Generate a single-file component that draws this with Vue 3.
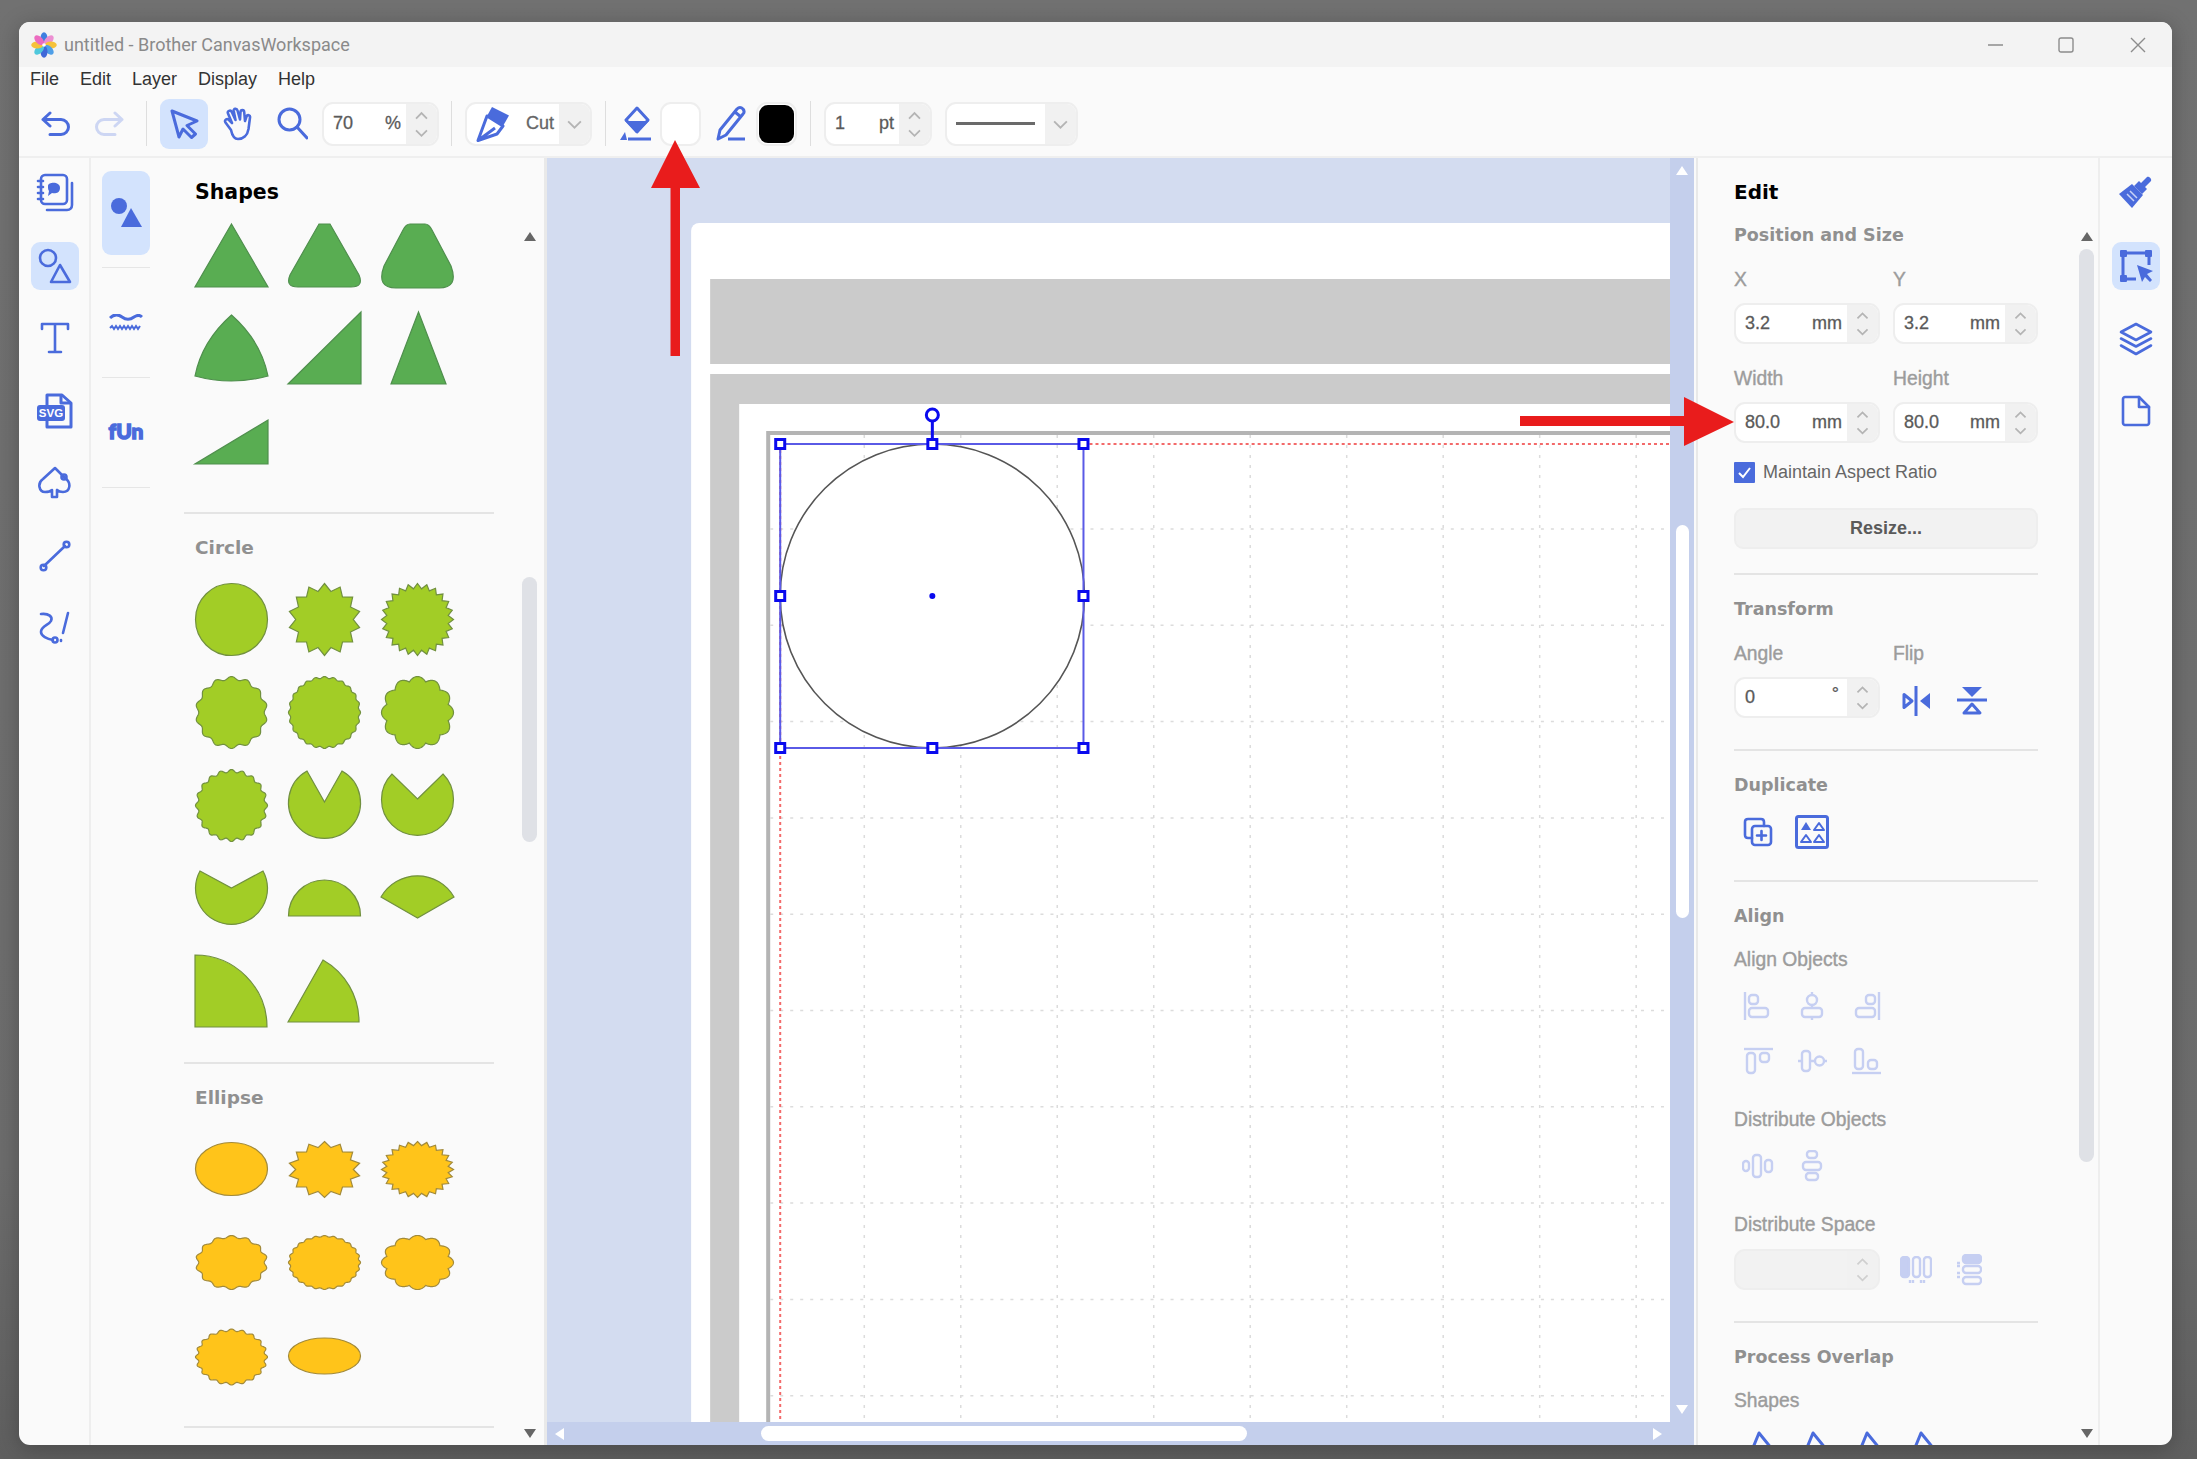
<template>
  <div class="desktop">
    <div class="window">
      <header class="titlebar">
        <svg class="logo" viewBox="0 0 26 26">
          <ellipse v-for="p in logoPetals" :key="p.deg" cx="13" cy="6.200" rx="3.500" ry="6" :fill="p.color" :transform="`rotate(${p.deg} 13 13)`" />
          <circle cx="13" cy="13" r="1.800" fill="#fff" />
        </svg>
        <span class="title">untitled - Brother CanvasWorkspace</span>
        <div class="win-btns">
          <svg viewBox="0 0 16 16"><path d="M0 8H15" /></svg>
          <svg viewBox="0 0 16 16"><rect x="1" y="1" width="14" height="14" rx="2" /></svg>
          <svg viewBox="0 0 16 16"><path d="M1 1L15 15M15 1L1 15" /></svg>
        </div>
      </header>

      <nav class="menubar">
        <span v-for="m in menus" :key="m">{{ m }}</span>
      </nav>

      <div class="toolbar">
        <div class="tool"><svg class="ico" width="30" height="26" viewBox="0 0 30 26"><path d="M9 2L2 8.5L9 15M2 8.500H20a7.500 7.500 0 0 1 0 15H9" /></svg></div>
        <div class="tool"><svg class="ico ico-off" width="30" height="26" viewBox="0 0 30 26"><path d="M21 2L28 8.500L21 15M28 8.500H10a7.500 7.500 0 0 0 0 15H21" /></svg></div>
        <div class="sep"></div>
        <div class="tool tall active"><svg class="ico" width="29" height="30" viewBox="0 0 29 30"><path d="M2 2L27 12L17 16.500L25.500 25L21.500 28.500L13 20L9 28Z" /></svg></div>
        <div class="tool"><svg class="ico thin" width="30" height="34" viewBox="0 0 30 34"><path d="M8 23L2.500 15.500C1 13 4 10.800 6 13L9 16L5 6.500C4 4 7.500 2.500 8.800 5L12.500 13L10.700 4C10.300 1.500 13.800 1 14.500 3.500L17 12.500L17.500 5C17.700 2.500 21 2.500 21.200 5L22 14L23.500 9.500C24.400 7.200 27.500 8 27 10.500L25.500 22C24.500 28.500 20 32 15 32C12 32 9.500 30 8 23Z" /></svg></div>
        <div class="tool"><svg class="ico" width="31" height="33" viewBox="0 0 31 33"><circle cx="12.500" cy="12.500" r="10.500" /><path d="M20 20L30 31" /></svg></div>
        <div class="spin spin-lg">
          <span class="val">70</span><span class="unit">%</span>
          <div class="spin-btns"><svg viewBox="0 0 30 44"><path d="M9 16L15 10L21 16M9 29L15 35L21 29" /></svg></div>
        </div>
        <div class="sep"></div>
        <div class="spin spin-lg cut">
          <svg class="cut-ico" width="34" height="36" viewBox="0 0 34 36">
            <path class="solid" d="M16 1L33 9.500L27 20L11 10Z" />
            <path class="ico-line" d="M11 10L27 20L21 28L2 34.500ZM2 34.500L19 22" />
          </svg>
          <span class="cut-label">Cut</span>
          <div class="spin-btns"><svg viewBox="0 0 30 44"><path d="M8 19L15 26L22 19" /></svg></div>
        </div>
        <div class="sep"></div>
        <svg class="bucket" width="32" height="36" viewBox="0 0 32 36">
          <path class="solid" d="M5 15H29L17 27Z" />
          <path class="ico-line" d="M6 14L17 2L28 14L17 26Z" />
          <path class="solid" d="M0 34L5 26L7 34Z" />
          <path class="ico-line" d="M8 33H31" />
        </svg>
        <div class="swatch"></div>
        <svg class="pencil" width="32" height="36" viewBox="0 0 32 36">
          <path class="ico-line" d="M3 33L5 24L22 3C24 1 26 1 28 3C29.500 5 29.500 6.500 28 8L11 29ZM20 6L26 11" />
          <path class="ico-line" d="M13 33H30" />
        </svg>
        <div class="swatch swatch-black"><i></i></div>
        <div class="sep sep-tight"></div>
        <div class="spin spin-pt">
          <span class="val">1</span><span class="unit">pt</span>
          <div class="spin-btns"><svg viewBox="0 0 30 44"><path d="M9 16L15 10L21 16M9 29L15 35L21 29" /></svg></div>
        </div>
        <div class="spin spin-line">
          <i class="line-sample"></i>
          <div class="spin-btns"><svg viewBox="0 0 30 44"><path d="M8 19L15 26L22 19" /></svg></div>
        </div>
      </div>

      <div class="body">
        <aside class="rail">
          <div class="rail-btn">
            <svg class="ico thin" width="38" height="40" viewBox="0 0 38 40">
              <path d="M11 37H31C34 37 36 35 36 32V10" />
              <rect x="5" y="2" width="26" height="29" rx="4" />
              <path d="M2 8H7M2 14H7M2 20H7M2 26H7" />
              <path class="solid" d="M12 13C12 9 24 8 24 15C24 20 19 21 16 20L12 23L13 18C12 17 12 15 12 13Z" />
            </svg>
          </div>
          <div class="rail-btn active">
            <svg class="ico thin" width="34" height="36" viewBox="0 0 34 36"><circle cx="10" cy="10" r="8" /><path d="M22 17L32 34H13Z" /></svg>
          </div>
          <div class="rail-btn">
            <svg class="ico thin" width="30" height="32" viewBox="0 0 30 32"><path d="M2 7V2H28V7M15 2V30M9 30H21" /></svg>
          </div>
          <div class="rail-btn">
            <svg width="36" height="36" viewBox="0 0 36 36">
              <path class="ico-line" d="M10 12V2H25L34 10V34H10V28" />
              <path class="ico-line" d="M24 2V10H34" />
              <rect class="solid" x="0" y="12" width="28" height="16" rx="3" />
              <text x="14" y="24" class="svg-tag">SVG</text>
            </svg>
          </div>
          <div class="rail-btn">
            <svg class="ico thin" width="34" height="34" viewBox="0 0 34 34">
              <path d="M17 2L27 12C34 17 32 26 25 26C22 26 20 25 19 24V31H14V24C12 26 9 26 7 26C1 26 -1 17 5 13Z" />
              <circle cx="26" cy="11" r="2.500" />
            </svg>
          </div>
          <div class="rail-btn">
            <svg class="ico thin" width="32" height="32" viewBox="0 0 32 32"><path d="M5 26L26 6" /><circle cx="4.500" cy="27.500" r="2.800" /><circle cx="27.500" cy="4.500" r="2.800" /></svg>
          </div>
          <div class="rail-btn">
            <svg class="ico thin" width="32" height="34" viewBox="0 0 32 34"><path d="M2 3C10 2 14 6 12 10C10 14 2 15 2 21C2 25 8 28 14 29" /><circle cx="16" cy="29" r="2.500" /><path d="M29 2L24 22M22 29L22 30" /></svg>
          </div>
        </aside>

        <div class="kinds">
          <div class="kind"><div class="kind-active">
            <svg width="32" height="32" viewBox="0 0 32 32"><circle class="solid" cx="9" cy="9" r="8" /><path class="solid" d="M21 11L32 30H11Z" /></svg>
          </div></div>
          <div class="kind">
            <svg class="wave-ico" width="34" height="18" viewBox="0 0 34 18"><path d="M1 4C5 0 9 0 13 3C17 6 21 6 25 3C28 1 31 1 33 3" /><path class="tiny" d="M1 14l2-2 2 3 2-3 2 3 2-3 2 3 2-3 2 3 2-3 2 3 2-3 2 3 2-3 2 3 2-3" /></svg>
          </div>
          <div class="kind">
            <svg class="fun-ico" width="38" height="24" viewBox="0 0 38 24"><text x="19" y="18" class="fun">fUn</text></svg>
          </div>
        </div>

        <section class="shapes">
          <div v-for="s in shapeSections" :key="s.title" class="shape-sec" :class="s.kind">
            <h2 :class="{ main: s.main }">{{ s.title }}</h2>
            <div class="shape-grid">
              <svg v-for="(d, i) in s.shapes" :key="i" viewBox="0 0 73 73"><path :d="d" /></svg>
            </div>
          </div>
        </section>

        <div class="vscroll">
          <i class="tri-up"></i>
          <div class="vthumb"></div>
          <div class="grow"></div>
          <i class="tri-down"></i>
        </div>

        <main class="canvas">
          <svg class="sheet" viewBox="548 158 1122 1264" preserveAspectRatio="none">
            <rect x="692" y="223" width="1000" height="1300" rx="8" fill="#fff" />
            <rect x="711" y="279" width="980" height="85" fill="#cbcbcb" />
            <path d="M711 1430V374H1680V404H740V1430Z" fill="#cbcbcb" />
            <path d="M769 1430V433H1680" fill="none" stroke="#b4b4b4" stroke-width="4" />
            <g stroke="#dcdcdc" stroke-width="1.500" stroke-dasharray="3 7">
              <path v-for="x in gridX" :key="x" :d="`M${x} 435V1422`" />
              <path v-for="y in gridY" :key="y" :d="`M771 ${y}H1670`" />
            </g>
            <path d="M1090 444H1670M781 444V1422" fill="none" stroke="#f36a6a" stroke-width="2" stroke-dasharray="3 3" />
            <circle cx="933" cy="596" r="152" fill="#fff" stroke="#555" stroke-width="1.600" />
            <rect x="781" y="444" width="303" height="304" fill="none" stroke="#5a5ae6" stroke-width="2" />
            <path d="M933 421V444" stroke="#0a0aee" stroke-width="3" />
            <circle cx="933" cy="415" r="6" fill="#fff" stroke="#0a0aee" stroke-width="3" />
            <circle cx="933" cy="596" r="3" fill="#0a0aee" />
            <rect v-for="h in handles" :key="h[0] + '-' + h[1]" :x="h[0] - 4.500" :y="h[1] - 4.500" width="9" height="9" fill="#fff" stroke="#0a0aee" stroke-width="3" />
          </svg>
          <div class="canvas-v">
            <i class="tri-up white"></i>
            <div class="canvas-v-thumb"></div>
            <div class="grow"></div>
            <i class="tri-down white"></i>
          </div>
          <div class="canvas-h">
            <i class="tri-left"></i>
            <div class="canvas-h-thumb"></div>
            <div class="grow"></div>
            <i class="tri-right"></i>
          </div>
          <div class="canvas-corner"></div>
        </main>

        <section class="edit">
          <h2 class="main">Edit</h2>
          <h2 class="pos-head">Position and Size</h2>
          <div class="pair">
            <div v-for="f in sizeFields" :key="f.label" class="field">
              <label>{{ f.label }}</label>
              <div class="spin">
                <span class="val">{{ f.value }}</span><span class="unit">mm</span>
                <div class="spin-btns"><svg viewBox="0 0 30 44"><path d="M9 16L15 10L21 16M9 29L15 35L21 29" /></svg></div>
              </div>
            </div>
          </div>
          <div class="check-row">
            <span class="check"><svg viewBox="0 0 21 21"><path d="M5 11L9 15L16 6" /></svg></span>
            <span>Maintain Aspect Ratio</span>
          </div>
          <button class="resize">Resize...</button>

          <div class="edit-sec transform">
            <h2>Transform</h2>
            <div class="pair">
              <div class="field">
                <label>Angle</label>
                <div class="spin">
                  <span class="val">0</span><span class="unit deg">°</span>
                  <div class="spin-btns"><svg viewBox="0 0 30 44"><path d="M9 16L15 10L21 16M9 29L15 35L21 29" /></svg></div>
                </div>
              </div>
              <div class="field">
                <label>Flip</label>
                <div class="flip-row">
                  <svg width="30" height="32" viewBox="0 0 30 32"><path class="ico-line" d="M2 9.500L10 16L2 22.500Z" /><path class="ico-line" d="M14 1V31" /><path class="solid" d="M28 8V24L18 16Z" /></svg>
                  <svg width="32" height="30" viewBox="0 0 32 30"><path class="solid" d="M6 1H26L16 11Z" /><path class="ico-line" d="M1 14H31" /><path class="ico-line" d="M8 27L16 18L24 27Z" /></svg>
                </div>
              </div>
            </div>
          </div>

          <div class="edit-sec duplicate">
            <h2>Duplicate</h2>
            <div class="icon-row">
              <div class="icon-cell">
                <svg class="ico thin" width="30" height="30" viewBox="0 0 30 30"><path d="M9 21H5C3 21 2 20 2 18V5C2 3 3 2 5 2H18C20 2 21 3 21 5V9" /><rect x="9" y="9" width="19" height="19" rx="3" /><path d="M18.500 14V23M14 18.500H23" /></svg>
              </div>
              <div class="icon-cell">
                <svg width="34" height="34" viewBox="0 0 34 34">
                  <rect class="ico-line" x="1.500" y="1.500" width="31" height="31" rx="2" />
                  <path class="solid" d="M6 15L11 7L16 15Z" /><path class="ico-small" d="M19 15L24 8L29 15Z" />
                  <path class="ico-small" d="M6 27L11 20L16 27Z" /><path class="ico-small" d="M19 27L24 20L29 27Z" />
                </svg>
              </div>
            </div>
          </div>

          <div class="edit-sec last">
            <h2>Align</h2>
            <label class="group-label">Align Objects</label>
            <div class="icon-row off">
              <div class="icon-cell"><svg width="30" height="28" viewBox="0 0 30 28"><path d="M2 0V28" /><rect x="6" y="3" width="9" height="9" rx="3" /><rect x="6" y="16" width="19" height="9" rx="3" /></svg></div>
              <div class="icon-cell"><svg width="30" height="28" viewBox="0 0 30 28"><path d="M15 0V3M15 13V16M15 25V28" /><circle cx="15" cy="8" r="5" /><rect x="5" y="16" width="20" height="9" rx="3" /></svg></div>
              <div class="icon-cell"><svg width="30" height="28" viewBox="0 0 30 28"><path d="M28 0V28" /><rect x="15" y="3" width="9" height="9" rx="3" /><rect x="5" y="16" width="19" height="9" rx="3" /></svg></div>
            </div>
            <div class="icon-row off">
              <div class="icon-cell"><svg width="30" height="28" viewBox="0 0 30 28"><path d="M1 2H30" /><rect x="4" y="6" width="8" height="20" rx="3" /><rect x="17" y="6" width="9" height="9" rx="3" /></svg></div>
              <div class="icon-cell"><svg width="30" height="28" viewBox="0 0 30 28"><path d="M1 14H5M13 14H18M27 14H30" /><rect x="5" y="4" width="8" height="20" rx="3" /><circle cx="22.500" cy="14" r="4.500" /></svg></div>
              <div class="icon-cell"><svg width="30" height="28" viewBox="0 0 30 28"><path d="M1 26H30" /><rect x="4" y="2" width="8" height="20" rx="3" /><rect x="17" y="13" width="9" height="9" rx="3" /></svg></div>
            </div>
            <label class="group-label wide">Distribute Objects</label>
            <div class="icon-row off">
              <div class="icon-cell"><svg width="32" height="28" viewBox="0 0 32 28"><rect x="1" y="9" width="6" height="10" rx="3" /><rect x="11" y="3" width="8" height="22" rx="3" /><rect x="23" y="8" width="7" height="12" rx="3" /></svg></div>
              <div class="icon-cell"><svg width="28" height="32" viewBox="0 0 28 32"><rect x="9" y="1" width="10" height="7" rx="3" /><rect x="5" y="12" width="18" height="8" rx="3" /><rect x="8" y="23" width="12" height="7" rx="3" /></svg></div>
            </div>
            <label class="group-label wide">Distribute Space</label>
            <div class="space-row">
              <div class="spin disabled">
                <span class="val"></span>
                <div class="spin-btns"><svg viewBox="0 0 30 44"><path d="M9 16L15 10L21 16M9 29L15 35L21 29" /></svg></div>
              </div>
              <div class="space-icons off">
                <svg width="32" height="28" viewBox="0 0 32 28"><rect class="off-solid" x="1" y="1" width="8" height="20" rx="3" /><rect x="13" y="1" width="7" height="20" rx="3" /><rect x="24" y="1" width="7" height="20" rx="3" /><path d="M10 24V27M13 24V27M21 24V27M24 24V27" /></svg>
                <svg width="26" height="32" viewBox="0 0 26 32"><rect class="off-solid" x="7" y="1" width="18" height="8" rx="3" /><rect x="7" y="12" width="18" height="7" rx="3" /><rect x="7" y="23" width="18" height="7" rx="3" /><path d="M1 9H4M1 12H4M1 19H4M1 23H4" /></svg>
              </div>
            </div>
          </div>

          <div class="edit-sec">
            <h2>Process Overlap</h2>
            <label class="group-label">Shapes</label>
            <div class="overlap-row">
              <svg v-for="n in 4" :key="n" width="30" height="30" viewBox="0 0 30 30"><path class="ico-line" d="M4 24L13 2L26 18L11 30" /></svg>
            </div>
          </div>
        </section>

        <div class="vscroll edit-scroll">
          <i class="tri-up"></i>
          <div class="vthumb"></div>
          <div class="grow"></div>
          <i class="tri-down"></i>
        </div>

        <aside class="rail rail-right">
          <div class="rail-btn">
            <svg width="36" height="34" viewBox="0 0 36 34">
              <path class="solid" d="M23 7L29 1C31 0 34 3 33 5L27 11L29 13L24 18L16 10L21 5Z" />
              <path class="solid" d="M14 8L25 19L14 32L1 18Z" />
              <path d="M9 18L16 25M12 15L19 22" stroke="#c8d2f6" stroke-width="1.500" />
            </svg>
          </div>
          <div class="rail-btn active">
            <svg width="34" height="34" viewBox="0 0 34 34">
              <path class="ico-line" d="M4 4H30V16M4 4V30H17" />
              <rect class="solid" x="1" y="1" width="7" height="7" rx="1" /><rect class="solid" x="26" y="1" width="7" height="7" rx="1" /><rect class="solid" x="1" y="26" width="7" height="7" rx="1" />
              <path class="solid" d="M18 16L34 22L28 25L33 31L31 33L26 28L23 33Z" />
            </svg>
          </div>
          <div class="rail-btn">
            <svg class="ico thin" width="34" height="34" viewBox="0 0 34 34"><path d="M17 2L32 10L17 18L2 10Z" /><path d="M2 16.500L17 24.500L32 16.500M2 23.500L17 32L32 23.500" /></svg>
          </div>
          <div class="rail-btn">
            <svg class="ico thin" width="30" height="32" viewBox="0 0 30 32"><path d="M2 4C2 3 3 2 4 2H18L28 12V28C28 29 27 30 26 30H4C3 30 2 29 2 28Z" /><path d="M18 2V12H28" /></svg>
          </div>
        </aside>
      </div>
    </div>

    <svg class="marks" viewBox="0 0 2197 1459">
      <path d="M675 140L700 188H680V356H670.500V188H651Z" />
      <path d="M1734 422L1684 397V416H1520V426H1684V446Z" />
    </svg>
  </div>
</template>

<script setup>
const menus = ['File', 'Edit', 'Layer', 'Display', 'Help']

const logoPetals = [
  { deg: 0, color: '#3f7fe0' },
  { deg: 45, color: '#ec8fd2' },
  { deg: 90, color: '#f6c23a' },
  { deg: 135, color: '#4f9fe8' },
  { deg: 180, color: '#3f68d8' },
  { deg: 225, color: '#4fc8dc' },
  { deg: 270, color: '#f6c23a' },
  { deg: 315, color: '#ec6bc0' },
]

const sizeFields = [
  { label: 'X', value: '3.2' },
  { label: 'Y', value: '3.2' },
  { label: 'Width', value: '80.0' },
  { label: 'Height', value: '80.0' },
]

// builds a closed outline from a radius function around the tile centre
const outline = (radius, steps, rx = 36, ry = 36, cy = 36.5) => {
  const pts = []
  for (let i = 0; i < steps; i++) {
    const a = (i / steps) * Math.PI * 2
    const r = radius(a, i)
    pts.push(`${(36.5 + Math.sin(a) * r * rx).toFixed(2)} ${(cy - Math.cos(a) * r * ry).toFixed(2)}`)
  }
  return `M${pts.join('L')}Z`
}
const star = (n, inner, rx, ry, cy) => outline((a, i) => (i % 2 ? inner : 1), n * 2, rx, ry, cy)
const wave = (n, depth, rx, ry, cy) => outline((a) => 1 - depth * (1 - Math.cos(n * a)) / 2, 360, rx, ry, cy)
const scallop = (n, depth, rx, ry, cy) => outline((a) => 1 - depth * (1 - Math.abs(Math.cos((n * a) / 2))), 360, rx, ry, cy)
const ellipse = (rx, ry, cy) => `M${36.5 - rx} ${cy}A${rx} ${ry} 0 1 1 ${36.5 + rx} ${cy}A${rx} ${ry} 0 1 1 ${36.5 - rx} ${cy}Z`

const shapeSections = [
  {
    title: 'Shapes',
    main: true,
    kind: 'green',
    shapes: [
      'M36.5 4L73 67H0Z',
      'M31 4H42L71 55Q76 67 63 67H10Q-3 67 2 55Z',
      'M29 4H44Q48 4 51 10L70 46Q78 68 58 68H15Q-5 68 3 46L22 10Q25 4 29 4Z',
      'M36.5 2Q66 28 73 63Q36 73 0 63Q7 28 36.5 2Z',
      'M73 -1V71H0Z',
      'M37.5 -1L65 71H10Z',
      'M73 14V58H0Z',
    ],
  },
  {
    title: 'Circle',
    kind: 'lime',
    shapes: [
      ellipse(36, 36, 36.5),
      star(14, 0.8),
      star(24, 0.86),
      wave(14, 0.09),
      wave(24, 0.05),
      scallop(12, 0.12),
      wave(20, 0.08),
      'M36.5 33L54 2A36 36 0 1 1 19 2Z',
      'M36.5 30L62 5A36 36 0 1 1 11 5Z',
      'M36.5 26L68 9A36 36 0 1 1 5 9Z',
      'M0.5 54A36 36 0 0 1 72.5 54Z',
      'M36.5 56L0 35A42 42 0 0 1 73 35Z',
      'M0 0A72 72 0 0 1 72 72H0Z',
      'M0 67L35 5A71 71 0 0 1 71 67Z',
    ],
  },
  {
    title: 'Ellipse',
    kind: 'amber',
    shapes: [
      ellipse(36, 26.5, 36),
      star(14, 0.8, 36, 28),
      star(24, 0.86, 36, 28),
      wave(14, 0.09, 36, 27),
      wave(24, 0.05, 36, 27),
      scallop(12, 0.12, 36, 27),
      wave(20, 0.08, 36, 28, 38),
      ellipse(36, 18, 37),
    ],
  },
]

const gridX = Array.from({ length: 9 }, (_, i) => 865 + i * 96.4)
const gridY = Array.from({ length: 10 }, (_, i) => 529 + i * 96.3)
const handles = [
  [781, 444], [933, 444], [1084, 444],
  [781, 596], [1084, 596],
  [781, 748], [933, 748], [1084, 748],
]
</script>

<style>
html, body {
  margin: 0;
  background: #6e6e6e;
}
</style>

<style scoped>
.desktop {
  position: relative;
  width: 2197px;
  height: 1459px;
  padding: 22px 25px 14px 19px;
  box-sizing: border-box;
  background: linear-gradient(#717171, #6c6c6c 80%, #5f5f5f);
  overflow: hidden;
  font-family: "Liberation Sans", Arial, sans-serif;
  color: #555;
}

.window {
  height: 100%;
  display: flex;
  flex-direction: column;
  background: #fafafa;
  border-radius: 11px;
  overflow: hidden;
  box-shadow: 0 4px 22px rgba(0, 0, 0, 0.25);
}

.titlebar {
  height: 45px;
  flex: none;
  display: flex;
  align-items: center;
  padding-left: 12px;
  background: #f3f3f3;
}
.logo {
  width: 26px;
  height: 26px;
  margin-right: 7px;
}
.title {
  font-family: Roboto, sans-serif;
  font-size: 18px;
  color: #8a8a8a;
}
.win-btns {
  margin-left: auto;
  display: flex;
  gap: 54px;
  padding-right: 26px;
}
.win-btns svg {
  width: 16px;
  height: 16px;
  fill: none;
  stroke: #8c8c8c;
  stroke-width: 1.4;
  overflow: visible;
}
.win-btns svg:nth-child(2) {
  margin-right: 2px;
}

.menubar {
  height: 24px;
  flex: none;
  display: flex;
  gap: 21px;
  padding-left: 11px;
  align-items: center;
  font-size: 18px;
  color: #333;
}

.toolbar {
  height: 67px;
  flex: none;
  display: flex;
  align-items: center;
  padding-left: 13px;
  box-sizing: border-box;
  border-bottom: 2px solid #efefef;
}
.tool {
  width: 48px;
  height: 48px;
  margin-right: 6px;
  display: flex;
  align-items: center;
  justify-content: center;
  border-radius: 9px;
}
.tool:first-child {
  margin-right: 5px;
}
.tool.tall {
  height: 50px;
}
.active {
  background: #d3e3fd;
}
.sep {
  width: 1px;
  height: 45px;
  margin: 0 13px;
  background: #dedede;
}
.tool + .sep {
  margin-left: 7px;
}
.spin-lg + .sep {
  margin-left: 12px;
  margin-right: 13px;
}
.cut + .sep {
  margin-left: 13px;
  margin-right: 12px;
}
.sep-tight {
  margin-right: 13px;
}

.ico {
  fill: none;
  stroke: #4a6bdc;
  stroke-width: 3;
  stroke-linejoin: round;
  stroke-linecap: round;
}
.ico.thin {
  stroke-width: 2.6;
}
.ico-off {
  stroke: #cdd6f3;
}
.ico-line {
  fill: none;
  stroke: #4a6bdc;
  stroke-width: 3;
  stroke-linejoin: round;
}
.ico-small {
  fill: none;
  stroke: #4a6bdc;
  stroke-width: 2;
  stroke-linejoin: round;
}
.solid {
  fill: #4a6bdc;
  stroke: none;
}

.spin {
  display: flex;
  align-items: center;
  box-sizing: border-box;
  width: 146px;
  height: 41px;
  padding-left: 9px;
  background: #fff;
  border: 2px solid #eeeeee;
  border-radius: 11px;
  overflow: hidden;
  font-size: 18px;
  color: #5a5a5a;
  -webkit-text-stroke: 0.3px currentColor;
}
.val {
  flex: 1;
}
.unit {
  margin-right: 3px;
}
.deg {
  margin-right: 6px;
  transform: translateY(-3px);
}
.spin-btns {
  width: 31px;
  height: 100%;
  margin-left: 2px;
  flex: none;
  background: #f1f1f1;
}
.spin-btns svg {
  display: block;
  width: 100%;
  height: 100%;
  fill: none;
  stroke: #b4b4b4;
  stroke-width: 2;
}
.spin-lg {
  width: 117px;
  height: 44px;
}
.cut {
  width: 127px;
  padding-left: 9px;
}
.cut-ico {
  flex: none;
  margin-right: 16px;
}
.cut-label {
  flex: 1;
  color: #666;
}
.spin-pt {
  width: 108px;
  height: 44px;
}
.spin-line {
  width: 133px;
  height: 44px;
  margin-left: 13px;
}
.line-sample {
  flex: 1;
  height: 3px;
  margin-right: 8px;
  background: #6a6a6a;
}

.bucket {
  margin-left: 2px;
  flex: none;
}
.swatch {
  width: 41px;
  height: 44px;
  margin-left: 8px;
  flex: none;
  box-sizing: border-box;
  background: #fff;
  border: 2px solid #eeeeee;
  border-radius: 11px;
}
.pencil {
  margin-left: 14px;
  flex: none;
}
.swatch-black {
  margin-left: 9px;
  padding: 1px;
}
.swatch-black i {
  display: block;
  height: 100%;
  background: #000;
  border-radius: 9px;
}

.body {
  flex: 1;
  min-height: 0;
  display: flex;
}

.rail {
  width: 72px;
  flex: none;
  box-sizing: border-box;
  padding: 11px 0 0 12px;
  display: flex;
  flex-direction: column;
  gap: 24.5px;
  border-right: 2px solid #eeeeee;
}
.rail-btn {
  width: 48px;
  height: 48px;
  display: flex;
  align-items: center;
  justify-content: center;
  border-radius: 9px;
}
.svg-tag {
  font-size: 11.5px;
  font-weight: 700;
  fill: #fff;
  text-anchor: middle;
  font-family: "Liberation Sans", sans-serif;
}
.rail-right {
  width: 74px;
  padding-left: 12px;
  border-right: none;
  border-left: 2px solid #eeeeee;
  gap: 24.8px;
}

.kinds {
  width: 48px;
  margin-left: 11px;
  flex: none;
}
.kind {
  height: 109px;
  border-bottom: 1px solid #e6e6e6;
  display: flex;
  align-items: center;
  justify-content: center;
}
.kind-active {
  width: 48px;
  height: 84px;
  margin-top: 1px;
  display: flex;
  align-items: center;
  justify-content: center;
  background: #d3e3fd;
  border-radius: 9px;
}
.wave-ico {
  fill: none;
  stroke: #4a6bdc;
  stroke-width: 3;
}
.wave-ico .tiny {
  stroke-width: 2;
}
.fun-ico {
  overflow: visible;
}
.fun {
  font-family: Lato, "Liberation Sans", sans-serif;
  font-size: 21px;
  font-weight: 900;
  fill: #4a6bdc;
  stroke: #4a6bdc;
  stroke-width: 1.4;
  text-anchor: middle;
}

.shapes {
  width: 310px;
  margin-left: 34px;
  flex: none;
}
.shape-sec {
  padding: 22px 0 34px 11px;
  border-bottom: 2px solid #e4e4e4;
}
.shape-sec:first-child {
  padding-bottom: 33px;
}
h2 {
  margin: 0;
  line-height: 24px;
  font-family: "DejaVu Sans", sans-serif;
  font-size: 17.5px;
  font-weight: 700;
  color: #909090;
}
h2.main {
  font-size: 20px;
  color: #000;
}
.shape-sec h2 {
  font-size: 18.5px;
}
.shape-sec h2.main {
  font-size: 20.5px;
}
.shape-grid {
  margin-top: 23px;
  display: grid;
  grid-template-columns: repeat(3, 73px);
  grid-auto-rows: 73px;
  gap: 20px;
}
.shape-sec:first-child .shape-grid {
  margin-top: 16px;
}
.shape-grid svg {
  display: block;
  overflow: visible;
  stroke-width: 1.2;
}
.green path { fill: #59ad52; stroke: #4f8f4d; }
.lime path { fill: #a2cd26; stroke: #71903f; }
.amber path { fill: #ffc41a; stroke: #a28a3a; }

.vscroll {
  width: 15px;
  margin-left: 28px;
  margin-right: 7px;
  flex: none;
  display: flex;
  flex-direction: column;
  align-items: center;
  padding: 74px 0 7px;
  box-sizing: border-box;
}
.vthumb {
  width: 15px;
  height: 265px;
  margin-top: 336px;
  background: #dfe1e6;
  border-radius: 8px;
}
.grow {
  flex: 1;
}
i.tri-up, i.tri-down {
  width: 0;
  height: 0;
  flex: none;
  border-left: 6px solid transparent;
  border-right: 6px solid transparent;
}
.tri-up { border-bottom: 9px solid #666; }
.tri-down { border-top: 9px solid #666; }
.tri-up.white { border-bottom-color: #fff; }
.tri-down.white { border-top-color: #fff; }

.canvas {
  flex: 1;
  min-width: 0;
  display: grid;
  grid-template-columns: 1fr 24px;
  grid-template-rows: 1fr 23px;
  background: #d3dcf0;
  border-left: 3px solid #e9e9e9;
}
.sheet {
  width: 100%;
  height: 100%;
  display: block;
  min-height: 0;
}
.canvas-v {
  display: flex;
  flex-direction: column;
  align-items: center;
  padding: 8px 0 8px;
  background: #c4cfec;
}
.canvas-v-thumb {
  width: 13px;
  height: 393px;
  margin-top: 350px;
  background: #fff;
  border-radius: 7px;
}
.canvas-h {
  display: flex;
  align-items: center;
  padding: 0 8px;
  background: #c4cfec;
}
i.tri-left, i.tri-right {
  width: 0;
  height: 0;
  border-top: 6px solid transparent;
  border-bottom: 6px solid transparent;
}
.tri-left { border-right: 9px solid #fff; }
.tri-right { border-left: 9px solid #fff; }
.canvas-h-thumb {
  width: 486px;
  height: 15px;
  margin-left: 197px;
  background: #fff;
  border-radius: 8px;
}
.canvas-corner {
  background: #c4cfec;
}

.edit {
  width: 345px;
  margin-left: 2px;
  padding: 22px 0 0 36px;
  flex: none;
  box-sizing: content-box;
  overflow: hidden;
  border-left: 2px solid #e9e9e9;
}
.edit > * {
  width: 304px;
}
.pos-head {
  margin-top: 19px;
}
.pair {
  display: grid;
  grid-template-columns: 146px 145px;
  column-gap: 13px;
  row-gap: 24px;
  margin-top: 22px;
}
label {
  display: block;
  height: 22px;
  line-height: 22px;
  font-size: 19.3px;
  color: #9c9c9c;
  -webkit-text-stroke: 0.4px currentColor;
}
.field .spin {
  margin-top: 12px;
}
.field:nth-child(even) .spin {
  width: 145px;
}
.check-row {
  margin-top: 19px;
  display: flex;
  align-items: center;
  gap: 8px;
  height: 21px;
  font-size: 18px;
  color: #666;
}
.check {
  width: 21px;
  height: 21px;
  flex: none;
  background: #4a6bdc;
  border-radius: 1px;
}
.check svg {
  display: block;
  fill: none;
  stroke: #fff;
  stroke-width: 2;
}
.resize {
  display: block;
  margin-top: 25px;
  height: 41px;
  box-sizing: border-box;
  background: #f2f2f2;
  border: 2px solid #eeeeee;
  border-radius: 9px;
  font-family: inherit;
  font-size: 18px;
  font-weight: 700;
  color: #5a5a5a;
}
.edit-sec {
  margin-top: 25px;
  padding: 22px 0 30px;
  border-top: 2px solid #e4e4e4;
}
.edit-sec.transform {
  padding-bottom: 31px;
}
.edit-sec.duplicate {
  padding-bottom: 28px;
}
.edit-sec .pair {
  margin-top: 22px;
}
.resize + .edit-sec {
  margin-top: 24px;
}
.edit-sec + .edit-sec {
  margin-top: 0;
}
.flip-row {
  margin-top: 12px;
  height: 41px;
  display: flex;
  align-items: center;
  gap: 24px;
  padding-left: 9px;
  transform: translateY(3px);
}
.icon-row {
  margin-top: 15px;
  display: flex;
  gap: 14px;
  margin-left: 4px;
}
.icon-cell {
  width: 40px;
  height: 40px;
  display: flex;
  align-items: center;
  justify-content: center;
}
.off svg {
  fill: none;
  stroke: #c6cff2;
  stroke-width: 2.4;
}
.off .off-solid {
  fill: #c6cff2;
}
.group-label {
  margin-top: 21px;
}
.group-label.wide {
  margin-top: 28px;
}
.space-row {
  display: flex;
  align-items: center;
  margin-top: 13px;
}
.disabled {
  background: #f2f2f2;
}
.disabled .spin-btns svg {
  stroke: #cfcfcf;
}
.space-icons {
  display: flex;
  align-items: center;
  gap: 24px;
  margin-left: 20px;
}
.overlap-row {
  margin-top: 19px;
  display: flex;
  gap: 24px;
  padding-left: 12px;
}
.edit-sec.last {
  padding-bottom: 31px;
}

.edit-scroll {
  margin-left: 0;
  margin-right: 4px;
}
.edit-scroll .vthumb {
  height: 913px;
  margin-top: 8px;
}

.marks {
  position: absolute;
  inset: 0;
  width: 100%;
  height: 100%;
  pointer-events: none;
}
.marks path {
  fill: #e91c1c;
}
</style>
